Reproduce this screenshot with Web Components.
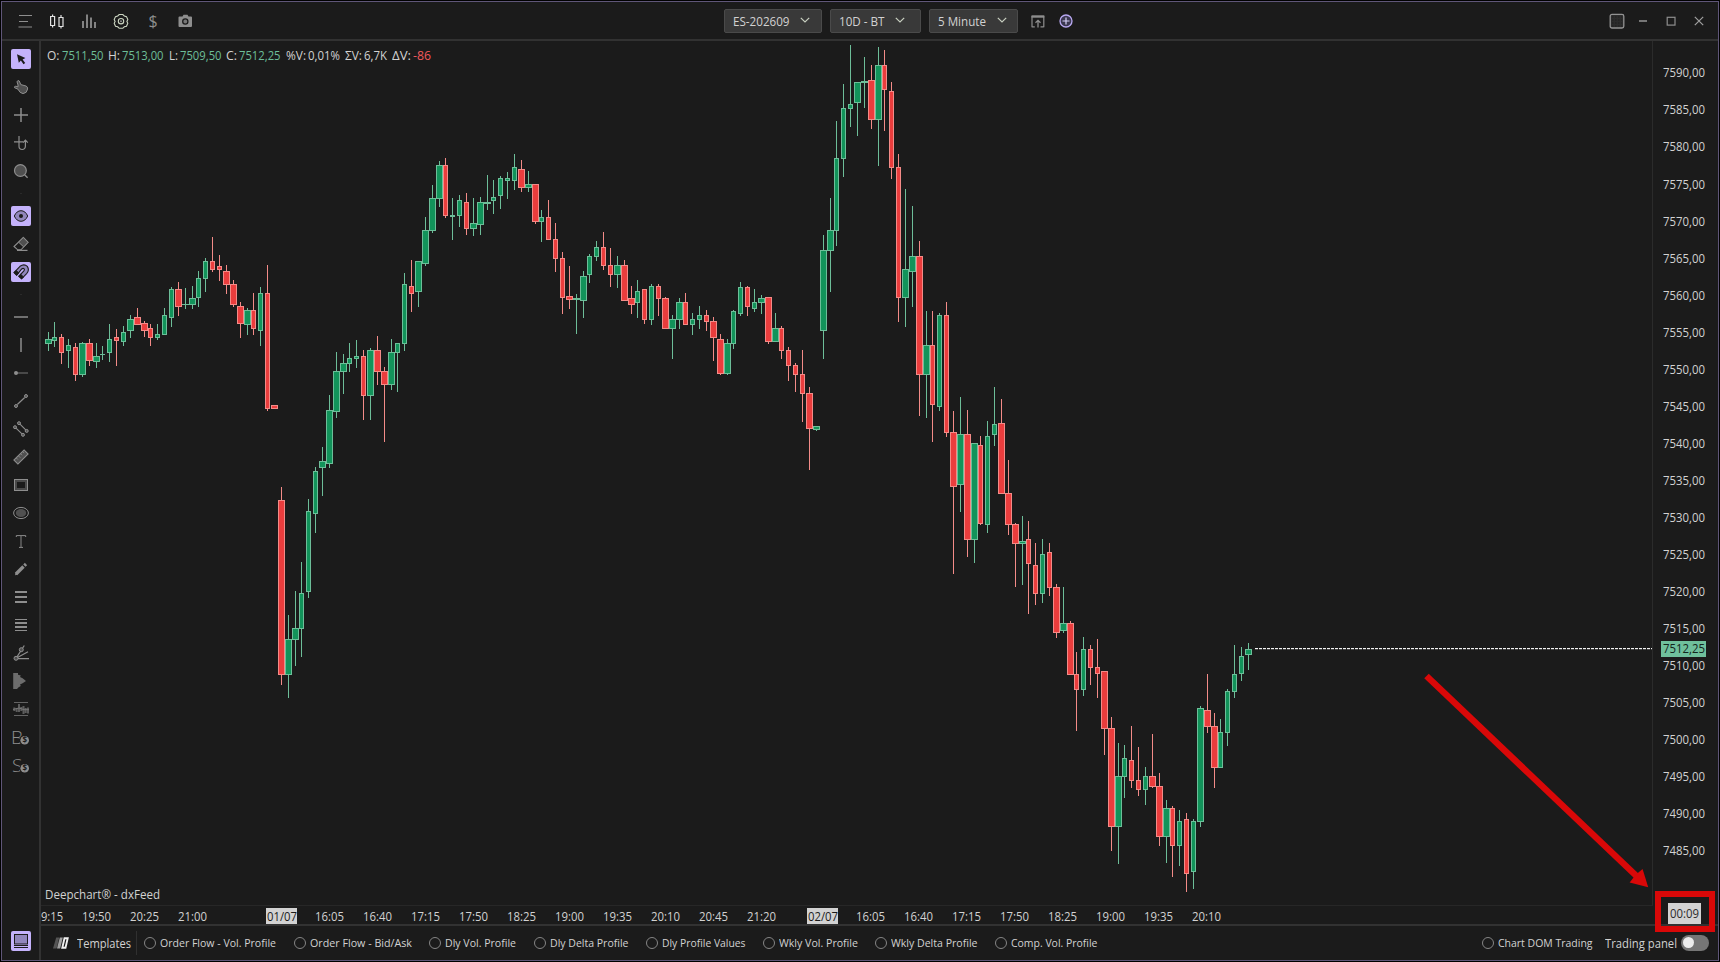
<!DOCTYPE html>
<html lang="en">
<head>
<meta charset="utf-8">
<title>Deepchart</title>
<style>
    html, body{
        margin: 0;
        height: 100%;
        background: #000;
        overflow: hidden;
    }
    body{
        font: 12px/16px "Open Sans", "Noto Sans", sans-serif;
        color: #d2d2d2;
        --bg: #1b1b1b;
        --line: #323232;
        --accent: #c4b2fb;
        --icon: #8e8e8e;
        --up: #12935a;
        --up-line: #6dbe99;
        --down: #ea3d3d;
        --down-line: #f38b88;
    }
</style>
</head>
<body>
<trading-window></trading-window>
<script>
//base class, every element clones its own template in the shadow root
class BaseElement extends HTMLElement{
    constructor(){
        super();
        this.attachShadow({mode: 'open'});
    }
    connectedCallback(){
        const template = document.createElement("template");
        template.innerHTML = `${this.getStyle()}${this.getTemplate()}`;
        this.shadowRoot.replaceChildren(template.content.cloneNode(true));
        this.ready();
    }
    getTemplate(){ return `<slot></slot>`; }
    getStyle(){ return ``; }
    ready(){}
}

//text squeezed to the width given in the "w" attribute
class FitText extends BaseElement{
    getTemplate(){
        return `<span><slot></slot></span>`;
    }
    getStyle(){
        return `
            <style>
                :host{
                    display: flex;
                    flex: none;
                    white-space: nowrap;
                    width: ${this.getAttribute("w")}px;
                }
                span{
                    display: block;
                    flex: none;
                    transform-origin: 0 50%;
                }
            </style>
        `;
    }
    ready(){
        const span = this.shadowRoot.querySelector("span");
        const natural = span.getBoundingClientRect().width;
        if(natural) span.style.transform = `scaleX(${this.getAttribute("w") / natural})`;
    }
}
customElements.define('fit-text', FitText);

const ICONS = {
    //top bar
    menu: `<path d="M4 4.500h13M4 10.500h9M3.500 16h13.500" stroke-width="1.2"/>`,
    candles: `<g stroke="#e2e2e2" stroke-width="1.2"><path d="M3.600 5.500h4v9h-4zM5.600 3.500v2M5.600 14.500v2M12 6.500h4v9h-4zM14 4v2.500M14 15.500v2"/></g>`,
    bars: `<path d="M4 10v7M8 3.500v13.500M12 6.500v10.500M16 11v6" stroke-width="1.8"/>`,
    gear: `<g stroke="#ccd6c2" stroke-width="1.1"><path d="M8.200 3.500h3.600l1.500 1.500 2.200.6 1.300 2.900-.9 1.900.9 1.900-1.300 2.900-2.200.6-1.500 1.500h-3.600l-1.500-1.500-2.200-.6-1.300-2.900.9-1.900-.9-1.900 1.300-2.900 2.200-.6z"/><circle cx="10" cy="10.200" r="2.700"/></g><circle cx="10" cy="10.200" r="1" fill="#888" stroke="none"/>`,
    dollar: `<text x="10" y="16" text-anchor="middle" font-size="16" fill="#8e8e8e" stroke="none">$</text>`,
    camera: `<path d="M4.500 5.500h3l1-1.700h4l1 1.700h2.500q1 0 1 1v8.500q0 1-1 1h-11.500q-1 0-1-1v-8.500q0-1 1-1z" fill="#8e8e8e" stroke="none"/><circle cx="10.300" cy="10.500" r="2.600" fill="#777" stroke="#1b1b1b" stroke-width="1.300"/>`,
    popout: `<path d="M3.800 15.800h3M12.500 15.800h3.200M4 16.200V5M15.800 16.200V5" stroke="#8e8e8e" stroke-width="1.200"/><path d="M3.500 5.500h12.800" stroke-width="2.400"/><path d="M10 16.500V9.500M7.500 11.700L10 9.300l2.500 2.400" stroke-width="1.300"/>`,
    add: `<circle cx="10" cy="10" r="6" fill="#3b3850" stroke="#b9a9f2" stroke-width="1.300"/><path d="M10 6.500v7M6.500 10h7" stroke="#d8d0f8" stroke-width="1.200"/>`,
    //window buttons
    pattern: `<rect x="3.200" y="3.400" width="13.600" height="13.600" rx="1.800" fill="#2c2c2c" stroke="#929292" stroke-width="1.300"/><path d="M5 6h10M5 9h10M5 12h10M5 15h10" stroke="#1f1f1f" stroke-dasharray="1.500 1.500"/>`,
    minimize: `<path d="M6 10h8" stroke-width="1.600"/>`,
    maximize: `<rect x="6.200" y="6.300" width="7.800" height="7.800" stroke-width="1.200"/>`,
    close: `<path d="M5.800 5.800l8.400 8.400M14.200 5.800l-8.400 8.400" stroke-width="1.200" stroke="#a0a0a0"/>`,
    //side bar
    cursor: `<path d="M6 5.200L14.400 9 11.600 10.400 14.200 13.900 12.500 15.200 9.900 11.600 7.800 13.800z" fill="#1b1b1b" stroke="none"/>`,
    hand: `<path d="M7 12.200L3.500 10.700Q3 9.300 4.800 9.200L7 9.800V8L6 4.800Q6.700 2.700 8.300 4L9.800 7.600 15 9Q17 9.800 16.600 12 16 16.300 12 16.600 8.700 16.200 7 12.200z" fill="#505050" stroke-width="1"/>`,
    cross: `<path d="M3 10h14M10 3v14" stroke-width="1.500"/>`,
    magnetCross: `<path d="M3 8.800h9M8 3v10.300a3.200 3.200 0 0 0 6.400 0V7.500M12 9.700l2.400-2.600 2.400 2.600" stroke-width="1.200"/>`,
    search: `<circle cx="9.400" cy="9.500" r="5.900" fill="#505050" stroke-width="1.200"/><path d="M13.600 13.700l3 3" stroke-width="1.300"/>`,
    eye: `<path d="M3.300 10Q5.600 4.800 10 4.700 14.400 4.800 16.700 10 14.400 15.200 10 15.300 5.600 15.200 3.300 10z" fill="#9186bc" stroke="#1b1b1b"/><circle cx="10" cy="10" r="2" fill="#1b1b1b" stroke="none"/>`,
    eraser: `<path d="M12.300 3.500L17 8.300 10 15.800H6.700L3 12.500z" stroke-width="1.100"/><path d="M12.300 3.500L17 8.300 12.700 12.900 7.600 8.200z" fill="#505050" stroke-width="1"/><path d="M6 16.400h10.500" stroke-width="1.200"/>`,
    magnet: `<path d="M3 10.600L9 4.300Q13.200 1.300 16.300 4.400 18.800 8 15.600 11.600L10.600 16.800 7.800 14.300 12.900 9Q14 7.500 13 6.700 12 5.900 10.700 7L5.700 13.200z" fill="#9186bc" stroke="#1b1b1b" stroke-width="1.100"/><path d="M3 10.600L5 8.500 7.700 10.800 5.700 13.200zM7.800 14.300L9.700 12.300 12.400 14.900 10.600 16.800z" fill="#1b1b1b" stroke="#1b1b1b" stroke-width="1"/>`,
    hline: `<path d="M3 10h14" stroke-width="1.500"/>`,
    vline: `<path d="M10 3v14" stroke-width="1.500"/>`,
    ray: `<path d="M6 10h11" stroke="#6b6b6b" stroke-width="1.200"/><circle cx="5" cy="10" r="2" fill="#8e8e8e" stroke="none"/>`,
    trend: `<path d="M6.300 13.500l7.400-7" stroke-width="1.200"/><g fill="#555"><circle cx="5" cy="15" r="1.500"/><circle cx="15" cy="5" r="1.500"/></g>`,
    channel: `<path d="M8 4.200l7.700 7.700M4 8.200l8 7.600" stroke-width="1.100"/><g fill="#555"><circle cx="8" cy="4.200" r="1.500"/><circle cx="15.700" cy="11.900" r="1.500"/><circle cx="4" cy="8.200" r="1.500"/><circle cx="12" cy="15.800" r="1.500"/></g>`,
    ruler: `<g transform="rotate(-45 10 10)"><rect x="2.800" y="7.200" width="14.400" height="5.600" fill="#505050" stroke-width="1.100"/><path d="M6 7.500v2M9 7.500v2.500M12 7.500v2M15 7.500v2" stroke-width=".8"/></g>`,
    rect: `<rect x="3.500" y="4.500" width="13" height="11" stroke-width="1"/><rect x="5" y="6" width="10" height="8" stroke="#4a4a4a" stroke-width="2"/>`,
    ellipse: `<ellipse cx="10" cy="10" rx="7.400" ry="5.600" stroke-width="1"/><ellipse cx="10" cy="10" rx="5.200" ry="4" fill="#505050" stroke="none"/>`,
    text: `<path d="M5.300 6V4.600h9.400V6M8 16.400h4" stroke-width="1"/><path d="M10 4.600v11.800" stroke-width="1.200" stroke="#777"/>`,
    pencil: `<path d="M5 15l7.500-7.500" stroke-width="3.400"/><path d="M13.400 6.600l1.600-1.600" stroke-width="3.200"/><path d="M4 16.200l.5-2.500 2 2z" fill="#8e8e8e" stroke="none"/>`,
    lines3: `<path d="M4 5h12M4 10h12M4 15h12" stroke-width="1.900"/>`,
    lines4: `<path d="M4 4.500h12M4 15.500h12" stroke-width="1"/><path d="M4 8h12M4 12h12" stroke-width="1.900"/>`,
    fan: `<path d="M5 15.300L13.300 2.500M6 14.700L17 8.800M6.500 15.700H18" stroke-width="1.200"/><g fill="#505050"><circle cx="5" cy="15.300" r="2"/><circle cx="10.300" cy="6.700" r="2"/></g>`,
    profile: `<path d="M2.200 2h4.800v1.700l2.800.8-.8 1.600 2.600 1.200 3.400 2.700-3.400 2.300-2.600 1.300.8 1.500-2.200 1.200-1.600 1.700H2.200z" fill="#6c6c6c" stroke="none"/>`,
    levels: `<path d="M3 3.500h14M3 16.500h14" stroke="#636363"/><path d="M3.300 8.500v3.500M5.700 9v4M8 5v8M10.300 8v4M12.500 7v8M14.700 9v5M17 8.500v6" stroke="#5c5c5c" stroke-width="2"/><path d="M2 10.500l6-1.500 5 1.700h5" stroke="#777" stroke-width="1"/>`,
    buy: `<text x="0" y="16.800" font-size="19" font-weight="300" fill="#8e8e8e" stroke="none">B</text><circle cx="13.700" cy="13.300" r="5.300" fill="#1b1b1b" stroke="none"/><circle cx="13.700" cy="13.300" r="4.300" fill="#8e8e8e" stroke="none"/><text x="13.700" y="16.300" text-anchor="middle" font-size="8" font-weight="700" fill="#1b1b1b" stroke="none">$</text>`,
    sell: `<text x="1" y="16.800" font-size="19" font-weight="300" fill="#8e8e8e" stroke="none">S</text><circle cx="13.700" cy="13.300" r="5.300" fill="#1b1b1b" stroke="none"/><circle cx="13.700" cy="13.300" r="4.300" fill="#8e8e8e" stroke="none"/><text x="13.700" y="16.300" text-anchor="middle" font-size="8" font-weight="700" fill="#1b1b1b" stroke="none">$</text>`,
    panel: `<rect x="3.500" y="3.500" width="13" height="9.500" fill="#9186bc" stroke="#1b1b1b"/><path d="M3 14.500h14M3 16.500h14" stroke="#1b1b1b" stroke-width="1"/>`,
    //footer
    logo: `<g stroke="none"><path d="M5.200 4.500h3L5.600 15.500H2z" fill="#555"/><path d="M8.800 4.500h3l-2.600 11H6z" fill="#a0a0a0"/></g><path d="M13.500 5.300h3.200l-2.200 9.400h-3.200z" stroke="#f0f0f0" stroke-width="1.900"/>`
};

//20x20 icon, "active" paints the lilac square
class UiIcon extends BaseElement{
    getTemplate(){
        return `<svg width="20" height="20" viewBox="0 0 20 20">${ICONS[this.getAttribute("name")]}</svg>`;
    }
    getStyle(){
        return `
            <style>
                :host{
                    display: block;
                    flex: none;
                    width: 20px;
                    height: 20px;
                    border-radius: 2px;
                }
                :host([active]){
                    background: var(--accent);
                }
                svg{
                    display: block;
                    overflow: visible;
                    fill: none;
                    stroke: var(--icon);
                    font-family: "Open Sans", sans-serif;
                }
            </style>
        `;
    }
}
customElements.define('ui-icon', UiIcon);

class DropDown extends BaseElement{
    getTemplate(){
        return `
            <slot></slot>
            <svg width="10" height="6" viewBox="0 0 10 6"><path d="M.8.8L5 5 9.200.8" fill="none" stroke="#c8cfc0" stroke-width="1.200"/></svg>
        `;
    }
    getStyle(){
        return `
            <style>
                :host{
                    display: flex;
                    align-items: center;
                    justify-content: space-between;
                    box-sizing: border-box;
                    height: 24px;
                    width: ${this.getAttribute("width")}px;
                    padding: 2px ${this.getAttribute("end")}px 0 8px;
                    background: #393939;
                    border: 1px solid #4a4a4a;
                    border-radius: 2px;
                }
                svg{ margin-top: -3px; }
            </style>
        `;
    }
}
customElements.define('drop-down', DropDown);

class TopBar extends BaseElement{
    getTemplate(){
        return `
            <nav class="tools">
                ${["menu", "candles", "bars", "gear", "dollar", "camera"].map(n => `<ui-icon name="${n}"></ui-icon>`).join("")}
            </nav>
            <div class="selects">
                <drop-down width="98" end="11"><fit-text w="56.500">ES-202609</fit-text></drop-down>
                <drop-down width="91" end="15"><fit-text w="45.500">10D - BT</fit-text></drop-down>
                <drop-down width="89" end="10"><fit-text w="48">5 Minute</fit-text></drop-down>
                <ui-icon class="popout" name="popout"></ui-icon>
                <ui-icon name="add"></ui-icon>
            </div>
            <div class="window">
                <ui-icon name="pattern"></ui-icon>
                <ui-icon name="minimize"></ui-icon>
                <ui-icon name="maximize"></ui-icon>
                <ui-icon name="close"></ui-icon>
            </div>
        `;
    }
    getStyle(){
        return `
            <style>
                :host{
                    display: grid;
                    grid-template-columns: 722px 1fr auto;
                    align-items: center;
                    height: 37px;
                    border-bottom: 2px solid var(--line);
                }
                div, nav{
                    display: flex;
                    align-items: center;
                }
                .tools{
                    gap: 12px;
                    padding-left: 13px;
                }
                .selects{ gap: 8px; }
                .popout{ margin-left: 2px; }
                .window{
                    gap: 8px;
                    padding-right: 9px;
                }
                .window ui-icon:nth-child(1){ margin-right: -2px; }
            </style>
        `;
    }
}
customElements.define('top-bar', TopBar);

class SideBar extends BaseElement{
    getTemplate(){
        const groups = [
            ["*cursor", "hand", "cross", "magnetCross", "search"],
            ["*eye", "eraser", "*magnet"],
            ["hline", "vline", "ray", "trend", "channel", "ruler", "rect", "ellipse", "text", "pencil", "lines3", "lines4", "fan", "profile", "levels", "buy", "sell"]
        ];
        const icon = n => `<ui-icon name="${n.replace("*", "")}" ${n[0] == "*" ? "active" : ""}></ui-icon>`;
        return `
            ${groups.map(g => g.map(icon).join("")).join(`<i></i>`)}
            <ui-icon class="last" name="panel" active></ui-icon>
        `;
    }
    getStyle(){
        return `
            <style>
                :host{
                    display: flex;
                    flex-direction: column;
                    align-items: center;
                    gap: 8px;
                    width: 37px;
                    box-sizing: border-box;
                    padding: 8px 0 9px 1px;
                }
                i{
                    width: 2px;
                    height: 1px;
                    margin: 4px 0;
                    background: #2a2a2a;
                }
                .last{ margin-top: auto; }
            </style>
        `;
    }
}
customElements.define('side-bar', SideBar);

//x, high, body top, body bottom, low, G/R + body width
const CANDLES = `
48 332 339 344 351 G7|54 322 337 341 347 G5|61 334 337 353 364 R5|68 339 345 351 368 G5|75 343 347 375 381 R5|82 342 343 375 377 G7|89 339 343 361 366 R7|96 343 356 362 368 G7|102 346 354 355 360 G5|109 324 339 353 362 G5|
116 329 337 341 366 R5|123 326 332 342 346 G5|130 315 319 331 338 G7|137 308 317 325 325 R7|144 321 323 331 337 R7|150 324 328 338 346 R5|157 324 334 338 340 G5|164 308 315 335 335 G5|171 287 289 318 327 G5|178 282 289 307 316 R7|
185 288 304 305 309 G7|192 286 298 305 309 G7|198 271 278 298 307 G5|205 258 261 279 292 G5|212 237 261 270 272 R5|219 255 266 270 281 R5|226 265 271 285 294 R7|233 280 284 305 307 R7|240 302 306 324 338 R7|247 308 310 325 335 G7|
253 293 310 329 335 R5|260 287 293 331 346 G5|267 265 293 409 411 R5|274 405 405 409 409 R7|281 487 500 675 685 R7|288 615 639 675 698 G7|295 591 628 640 666 G7|301 562 593 629 657 G5|308 499 511 592 598 G5|315 467 471 514 533 G5|
322 447 461 468 496 G7|329 395 410 464 468 G7|336 352 371 412 418 G7|343 354 363 372 394 G7|349 343 358 364 372 G5|356 340 356 359 368 G5|363 350 356 396 420 R5|370 348 350 396 420 G7|377 336 350 372 385 R7|384 367 371 385 442 R7|
391 339 352 385 390 G7|397 343 343 353 392 G5|404 273 284 344 351 G5|411 260 286 294 312 R5|418 261 261 292 307 G7|425 217 230 264 266 G7|432 185 198 231 233 G7|439 161 165 199 207 G7|445 158 165 216 218 R5|452 198 215 217 240 G5|
459 195 200 216 227 G5|466 193 202 229 235 R5|473 198 223 229 236 G7|480 197 202 225 235 G7|487 175 202 204 210 G7|493 180 197 201 214 G5|500 176 178 196 209 G5|507 172 178 181 199 G5|514 154 167 181 190 G5|521 160 169 188 192 R7|
528 171 184 188 192 G7|535 184 184 222 224 R7|541 210 217 222 242 G5|548 200 217 240 240 R5|555 223 239 259 272 R5|562 252 258 298 314 R5|569 266 296 300 309 R7|576 294 298 300 334 G7|583 271 276 301 318 G7|589 254 256 275 283 G5|
596 241 247 257 261 G5|603 232 247 266 270 R5|610 248 265 275 287 R5|617 256 265 275 288 G7|624 260 265 301 301 R7|631 286 298 305 314 R7|637 280 291 303 318 G5|644 289 289 320 324 R5|651 284 286 320 325 G5|658 284 286 299 316 R5|
665 297 298 329 329 R7|672 315 319 329 359 G7|679 298 302 320 329 G7|685 293 302 325 325 R5|692 313 319 325 335 G5|699 306 315 320 329 G5|706 310 315 322 331 R5|713 317 321 338 361 R7|720 334 339 374 375 R7|727 339 343 374 375 G7|
733 310 311 344 349 G5|740 282 287 314 316 G5|747 286 287 307 316 R5|754 289 302 309 312 G5|761 295 298 303 314 G7|768 297 297 342 344 R7|775 313 328 342 342 G7|781 326 328 351 359 R5|788 347 350 366 381 R5|795 363 365 375 392 R5|
802 350 374 394 422 R5|809 387 393 429 470 R7|816 426 426 430 431 G7|823 235 250 331 359 G7|830 198 230 251 292 G7|836 121 158 231 246 G5|843 84 108 159 177 G5|850 45 104 109 127 G5|857 82 82 103 136 G7|864 57 81 83 108 G7|
871 65 80 120 129 R7|878 47 65 120 166 G7|884 50 65 90 131 R5|891 82 91 168 179 R5|898 154 167 298 322 R5|905 189 269 298 327 G7|912 206 256 272 307 G7|919 241 256 375 416 R7|926 311 345 375 418 G7|932 311 345 405 442 R5|
939 313 315 407 411 G5|946 302 315 433 437 R5|953 411 432 487 574 R7|960 397 434 485 512 G7|967 410 434 540 557 R7|974 443 443 540 563 G7|980 436 445 524 525 R5|987 421 436 525 533 G5|994 387 424 435 446 G5|1001 399 423 494 494 R7|
1008 460 493 525 535 R7|1015 523 524 544 587 R7|1022 516 541 544 585 G7|1028 521 539 564 614 R5|1035 543 565 594 605 R5|1042 539 554 594 603 G5|1049 543 552 588 596 R5|1056 584 587 633 638 R7|1063 587 623 631 633 G7|1070 621 623 675 675 R7|
1076 652 674 690 731 R5|1083 637 649 690 696 G5|1090 645 649 668 685 R5|1097 639 667 674 698 R5|1104 671 671 729 755 R7|1111 717 728 827 851 R7|1118 743 776 827 864 G7|1124 745 758 777 798 G5|1131 726 760 781 788 R5|1138 747 780 790 796 R5|
1145 767 776 790 805 G5|1152 734 776 787 788 R7|1159 773 786 837 846 R7|1166 800 808 837 863 G7|1172 806 808 846 877 R5|1179 810 821 846 866 G5|1186 813 819 874 892 R5|1193 819 821 872 889 G5|1200 706 708 822 827 G7|1207 674 710 727 733 R7|
1214 713 726 768 788 R7|1220 719 732 768 768 G5|1227 689 691 733 746 G5|1234 645 674 692 698 G5|1241 647 656 674 681 G5|1248 643 649 655 670 G7`;

class CandleChart extends BaseElement{
    drawCandle(row){
        const [x, high, top, bottom, low, kind] = row.trim().split(" ");
        const color = kind[0] == "G" ? "up" : "down";
        const w = Number(kind[1]);
        const left = x - (w - 1) / 2;
        const h = bottom - top;
        const inner = h > 2 ? `<rect x="${left + 1}" y="${+top + 1}" width="${w - 2}" height="${h - 2}" fill="var(--${color})"/>` : "";
        return `
            <g fill="var(--${color}-line)">
                <rect x="${x}" y="${high}" width="1" height="${low - high}"/>
                <rect x="${left}" y="${top}" width="${w}" height="${h}"/>
                ${inner}
            </g>`;
    }
    getTemplate(){
        const info = [
            ["O:", 12.5, "7511,50", 41.5, "up"], ["H:", 12, "7513,00", 41.5, "up"], ["L:", 9, "7509,50", 41.5, "up"], ["C:", 11, "7512,25", 41.5, "up"],
            ["%V:", 20, "0,01%", 32, ""], ["ΣV:", 17, "6,7K", 23, ""], ["ΔV:", 19, "-86", 18, "down"]
        ];
        return `
            <svg viewBox="41 41 1611 864" width="1611" height="864" shape-rendering="crispEdges">
                ${CANDLES.split("|").map(c => this.drawCandle(c)).join("")}
                <path d="M1255 649.500H1652" stroke="#4a4a4a" stroke-dasharray="3 1"/>
                <path d="M1255 648.500H1652" stroke="#f2f2f2" stroke-dasharray="3 1"/>
            </svg>
            <div class="info">
                ${info.map(([k, kw, v, vw, c]) => `<p><fit-text w="${kw}">${k}</fit-text><fit-text w="${vw}" class="${c}">${v}</fit-text></p>`).join("")}
            </div>
            <div class="brand"><fit-text w="115">Deepchart® - dxFeed</fit-text></div>
        `;
    }
    getStyle(){
        return `
            <style>
                :host{
                    display: block;
                    position: relative;
                    height: 864px;
                    border-bottom: 1px solid #272727;
                    border-right: 1px solid #2b2b2b;
                }
                svg{ display: block; }
                .info, .brand{
                    position: absolute;
                    left: 6px;
                    top: 7px;
                }
                .brand{
                    left: 4px;
                    top: auto;
                    bottom: 2px;
                }
                .info, p{
                    display: flex;
                    margin: 0;
                    gap: 5px;
                }
                p{ gap: 2px; }
                .up{ color: #6dbe99; }
                .down{ color: #f0595c; }
            </style>
        `;
    }
}
customElements.define('candle-chart', CandleChart);

class PriceAxis extends BaseElement{
    getTemplate(){
        let labels = "";
        for(let p = 7590; p >= 7485; p -= 5){
            labels += `<div><fit-text w="42">${p},00</fit-text></div>`;
        }
        return `${labels}<b><fit-text w="42">7512,25</fit-text></b>`;
    }
    getStyle(){
        return `
            <style>
                :host{
                    display: block;
                    position: relative;
                    padding: 13.900px 0 0 10px;
                    box-sizing: border-box;
                }
                div{
                    display: flex;
                    align-items: center;
                    height: 37.040px;
                }
                b{
                    position: absolute;
                    left: 8px;
                    top: 600px;
                    width: 43px;
                    padding-left: 2px;
                    background: #6fc09c;
                    color: #14251d;
                    font-weight: 400;
                }
            </style>
        `;
    }
}
customElements.define('price-axis', PriceAxis);

class TimeAxis extends BaseElement{
    getTemplate(){
        const times = "9:15 19:50 20:25 21:00 01/07 16:05 16:40 17:15 17:50 18:25 19:00 19:35 20:10 20:45 21:20 02/07 16:05 16:40 17:15 17:50 18:25 19:00 19:35 20:10".split(" ");
        return times.map(t => {
            const day = t.includes("/");
            return `<span class="${day ? "day" : ""}"><fit-text w="${t.length < 5 ? 22 : day ? 30 : 29}">${t}</fit-text></span>`;
        }).join("");
    }
    getStyle(){
        return `
            <style>
                :host{
                    display: flex;
                    height: 16px;
                    padding: 2px 0 0;
                }
                span{
                    display: flex;
                    justify-content: center;
                    width: 48px;
                }
                span:first-of-type{
                    width: 31px;
                    justify-content: flex-start;
                }
                fit-text{ margin-top: 1px; }
                .day{
                    width: 31px;
                    margin: 0 8px 0 50px;
                    background: #d2d2d2;
                    color: #1b1b1b;
                }
                .day ~ .day{ margin-left: 22px; }
            </style>
        `;
    }
}
customElements.define('time-axis', TimeAxis);

class RadioItem extends BaseElement{
    getTemplate(){
        return `<i></i><slot></slot>`;
    }
    getStyle(){
        return `
            <style>
                :host{
                    display: flex;
                    align-items: center;
                    gap: 4px;
                    font-size: 11.500px;
                }
                i{
                    box-sizing: border-box;
                    width: 12px;
                    height: 12px;
                    border: 1px solid #858585;
                    border-radius: 50%;
                }
            </style>
        `;
    }
}
customElements.define('radio-item', RadioItem);

class BottomBar extends BaseElement{
    getTemplate(){
        const items = [["Order Flow - Vol. Profile", 116], ["Order Flow - Bid/Ask", 102], ["Dly Vol. Profile", 71], ["Dly Delta Profile", 78.500], ["Dly Profile Values", 83.500], ["Wkly Vol. Profile", 79], ["Wkly Delta Profile", 86.500], ["Comp. Vol. Profile", 86.500]];
        return `
            <ui-icon name="logo"></ui-icon>
            <fit-text class="templates" w="54">Templates</fit-text>
            <hr>
            <div class="list">
                ${items.map(([t, w]) => `<radio-item><fit-text w="${w}">${t}</fit-text></radio-item>`).join("")}
            </div>
            <radio-item class="dom"><fit-text w="94.500">Chart DOM Trading</fit-text></radio-item>
            <fit-text class="panel" w="72">Trading panel</fit-text>
            <span class="toggle"><i></i></span>
        `;
    }
    getStyle(){
        return `
            <style>
                :host{
                    display: flex;
                    align-items: center;
                    height: 33px;
                    padding: 0 9px 0 10px;
                }
                .templates{ margin: 2px 5px 0 6px; }
                hr{
                    width: 1px;
                    height: 24px;
                    margin: 0 7px 0 0;
                    border: 0;
                    background: #303030;
                }
                .list{
                    display: flex;
                    gap: 17.500px;
                }
                .dom{ margin-left: auto; }
                .panel{ margin: 2px 4px 0 12.500px; }
                .toggle{
                    display: flex;
                    align-items: center;
                    width: 28px;
                    height: 16px;
                    border-radius: 8px;
                    background: #767676;
                }
                .toggle i{
                    width: 11px;
                    height: 11px;
                    margin-left: 2px;
                    border-radius: 50%;
                    background: #ececec;
                }
            </style>
        `;
    }
}
customElements.define('bottom-bar', BottomBar);

//red arrow and frame pointing at the countdown
class CountdownMark extends BaseElement{
    getTemplate(){
        return `
            <svg width="1720" height="962" viewBox="0 0 1720 962" fill="#d90808">
                <path d="M1426.500 676L1637 876.500" stroke="#d90808" stroke-width="6.500"/>
                <path d="M1648.200 887.200L1642.600 869 1636 874.500 1629.600 882.500z"/>
                <rect x="1658" y="894" width="54" height="35" fill="none" stroke="#d90808" stroke-width="6"/>
            </svg>
        `;
    }
    getStyle(){
        return `
            <style>
                :host{
                    position: absolute;
                    inset: 0;
                    pointer-events: none;
                }
            </style>
        `;
    }
}
customElements.define('countdown-mark', CountdownMark);

class TradingWindow extends BaseElement{
    getTemplate(){
        return `
            <main>
                <top-bar></top-bar>
                <section>
                    <side-bar></side-bar>
                    <div class="content">
                        <div class="chart">
                            <div class="plot">
                                <candle-chart></candle-chart>
                                <time-axis></time-axis>
                            </div>
                            <div class="prices">
                                <price-axis></price-axis>
                                <span class="clock"><fit-text w="29">00:09</fit-text></span>
                            </div>
                        </div>
                        <bottom-bar></bottom-bar>
                    </div>
                </section>
            </main>
            <countdown-mark></countdown-mark>
        `;
    }
    getStyle(){
        return `
            <style>
                :host{
                    display: block;
                    position: relative;
                    width: 1720px;
                    height: 962px;
                    box-sizing: border-box;
                    padding: 1px;
                }
                main{
                    box-sizing: border-box;
                    width: 1718px;
                    height: 960px;
                    border: 1px solid #5f5678;
                    background: var(--bg);
                }
                section{
                    display: flex;
                    height: 919px;
                }
                .content{
                    flex: 1;
                    border-left: 2px solid var(--line);
                }
                .chart{
                    display: flex;
                    height: 883px;
                    border-bottom: 2px solid var(--line);
                }
                .plot{ width: 1612px; }
                .prices{
                    display: flex;
                    flex-direction: column;
                    flex: 1;
                }
                price-axis{ height: 862px; }
                .clock{
                    display: flex;
                    align-items: center;
                    width: 31px;
                    height: 21px;
                    margin-left: 15px;
                    padding-left: 2px;
                    background: #d2d2d2;
                    color: #2b2b2b;
                }
            </style>
        `;
    }
}
customElements.define('trading-window', TradingWindow);
</script>
</body>
</html>
